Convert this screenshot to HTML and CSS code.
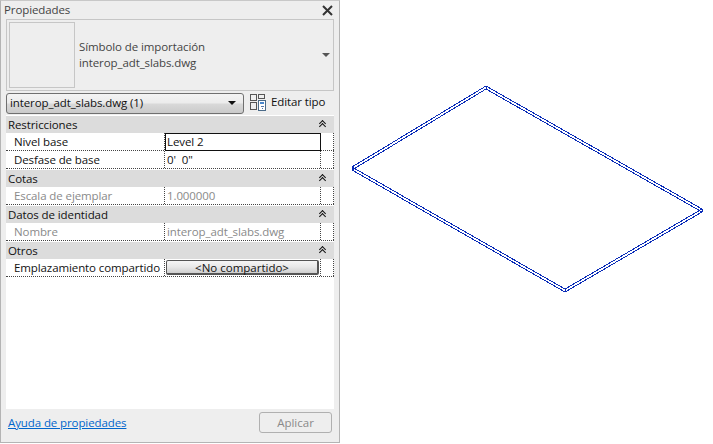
FILE: index.html
```html
<!DOCTYPE html>
<html lang="es">
<head>
<meta charset="utf-8">
<title>Propiedades</title>
<link rel="stylesheet" href="styles.css">
</head>
<body>
<div class="stage">
  <aside class="panel">
    <header class="title"><span>Propiedades</span>
      <svg class="close" width="11" height="11" viewBox="0 0 11 11"><path d="M1 1l9 9M10 1l-9 9" stroke="#333" stroke-width="2" fill="none"/></svg>
    </header>
    <div class="preview">
      <div class="thumb"></div>
      <div class="preview-text"><div>Símbolo de importación</div><div>interop_adt_slabs.dwg</div></div>
      <span class="arrow grey"></span>
    </div>
    <div class="selector">
      <div class="combo"><span>interop_adt_slabs.dwg (1)</span><span class="arrow"></span></div>
      <div class="edit">
        <svg width="17" height="18" viewBox="0 0 17 18" fill="none" stroke="#555" shape-rendering="crispEdges"><path d="M0.500 1.500h6v6h-6zM8.500 1.500h6v4h-6zM0.500 9.500h6v7h-6z"/><path d="M8.500 7.500h7v10h-7z" fill="#fff" stroke="#4a6a88"/><path d="M10 9h4v2h-4z" fill="#4a86cc" stroke="none"/><path d="M11 13.500h3M12 15.500h1" stroke="#57a"/></svg>
        <span>Editar tipo</span>
      </div>
    </div>
    <div class="table">
      <div class="group"><span>Restricciones</span><i class="chev"></i></div>
      <div class="row"><div class="label">Nivel base</div><div class="value active">Level 2</div><div class="tail"></div></div>
      <div class="row"><div class="label">Desfase de base</div><div class="value">0'&nbsp; 0"</div><div class="tail"></div></div>
      <div class="group"><span>Cotas</span><i class="chev"></i></div>
      <div class="row off"><div class="label">Escala de ejemplar</div><div class="value">1.000000</div><div class="tail"></div></div>
      <div class="group"><span>Datos de identidad</span><i class="chev"></i></div>
      <div class="row off"><div class="label">Nombre</div><div class="value">interop_adt_slabs.dwg</div><div class="tail"></div></div>
      <div class="group"><span>Otros</span><i class="chev"></i></div>
      <div class="row"><div class="label">Emplazamiento compartido</div><div class="value btn-cell"><button class="shared">&lt;No compartido&gt;</button></div><div class="tail"></div></div>
    </div>
    <footer class="foot">
      <a class="help" href="#">Ayuda de propiedades</a>
      <button class="apply">Aplicar</button>
    </footer>
  </aside>
  <svg class="drawing" width="373" height="444" viewBox="340 0 373 444" fill="none" stroke="#0a2cb8" shape-rendering="crispEdges">
    <path d="M352 167L486 86L702 209L565 289Z"/>
    <path d="M352 170L486 89L702 212L565 292Z"/>
    <path d="M352 167V170M486 86V89M702 209V212M565 289V292"/>
  </svg>
</div>
</body>
</html>
```
FILE: styles.css
```css
* { box-sizing: border-box; }
html, body { margin: 0; padding: 0; background: #fff; }
body { font: 12px/16px "Open Sans", "Noto Sans", sans-serif; color: #111; overflow: hidden; }
.stage { display: flex; width: 713px; height: 444px; }
.panel {
  width: 340px; height: 443px; flex: none; display: flex; flex-direction: column;
  background: #eeeeee; border: 1px solid #b4b4b4; border-top-color: #c8c8c8;
  padding: 0 5px;
  font-size: 11.5px; letter-spacing: -0.1px;
}
.title { height: 18px; flex: none; display: flex; justify-content: space-between; align-items: center; color: #444; font-size: 11.5px; margin-left: -2px; margin-right: 0; }
.close { margin-right: 1px; }
.preview { height: 72px; flex: none; display: flex; align-items: center; border: 1px solid #c6c6c6; padding: 2px; }
.thumb { width: 66px; height: 66px; flex: none; border: 1px solid #c6c6c6; }
.preview-text { flex: 1; margin-left: 4px; color: #444; line-height: 16px; font-size: 11.5px; }
.arrow { width: 0; height: 0; border: 4px solid transparent; border-top: 4px solid #111; border-bottom: 0; margin-right: 1px; flex: none; }
.arrow.grey { border-top-color: #555; }
.selector { height: 24px; flex: none; display: flex; align-items: center; }
.combo {
  width: 238px; height: 21px; flex: none; display: flex; justify-content: space-between; align-items: center;
  border: 1px solid #707070; border-radius: 3px; padding: 0 3px; color: #111;
  background: linear-gradient(#f4f4f4 0%, #ececec 45%, #d8d8d8 55%, #cacaca 100%);
}
.combo .arrow { margin-right: 4px; }
.edit { display: flex; align-items: center; gap: 4px; margin: 0 0 2px 6px; color: #111; }
.table { flex: 1; background: #fff; display: flex; flex-direction: column; }
.group { height: 18px; flex: none; display: flex; align-items: center; justify-content: space-between; background: #dcdcdc; border-top: 1px solid #fff; padding: 0 8px 0 2px; color: #111; }
.chev { display: block; width: 7px; height: 9px; flex: none; position: relative; }
.chev::before, .chev::after { content: ""; position: absolute; left: 1px; width: 4px; height: 4px; border-top: 1.5px solid #111; border-left: 1.5px solid #111; transform: rotate(45deg); }
.chev::before { top: 1px; }
.chev::after { top: 4px; }
.row { height: 18px; flex: none; display: flex; border-bottom: 1px dotted #444; line-height: 18px; }
.label { width: 159px; flex: none; padding-left: 8px; border-right: 1px dotted #444; color: #111; white-space: nowrap; }
.value { width: 156px; flex: none; padding-left: 2px; border-right: 1px dotted #444; color: #111; }
.tail { flex: 1; border-right: 1px dotted #444; }
.off .label, .off .value { color: #8a8a8a; }
.value.active { border: 1px solid #111; padding-left: 1px; line-height: 16px; height: 18px; }
.btn-cell { padding: 1px; }
.shared {
  display: block; width: 100%; height: 15px; padding: 0; margin: 0; font: inherit; line-height: 13px; color: #111;
  border: 1px solid #555; border-right-width: 2px; border-bottom-width: 2px; border-radius: 2px;
  background: linear-gradient(#f6f6f6, #e8e8e8 50%, #cfcfcf);
}
.foot { height: 33px; flex: none; display: flex; justify-content: space-between; align-items: center; padding: 0 2px 6px; }
.help { color: #0066cc; text-decoration: underline; }
.apply { width: 73px; height: 21px; font: inherit; padding: 0; color: #8a8a8a; background: #eeeeee; border: 1px solid #b0b0b0; border-radius: 3px; }
.drawing { display: block; flex: none; }
```
